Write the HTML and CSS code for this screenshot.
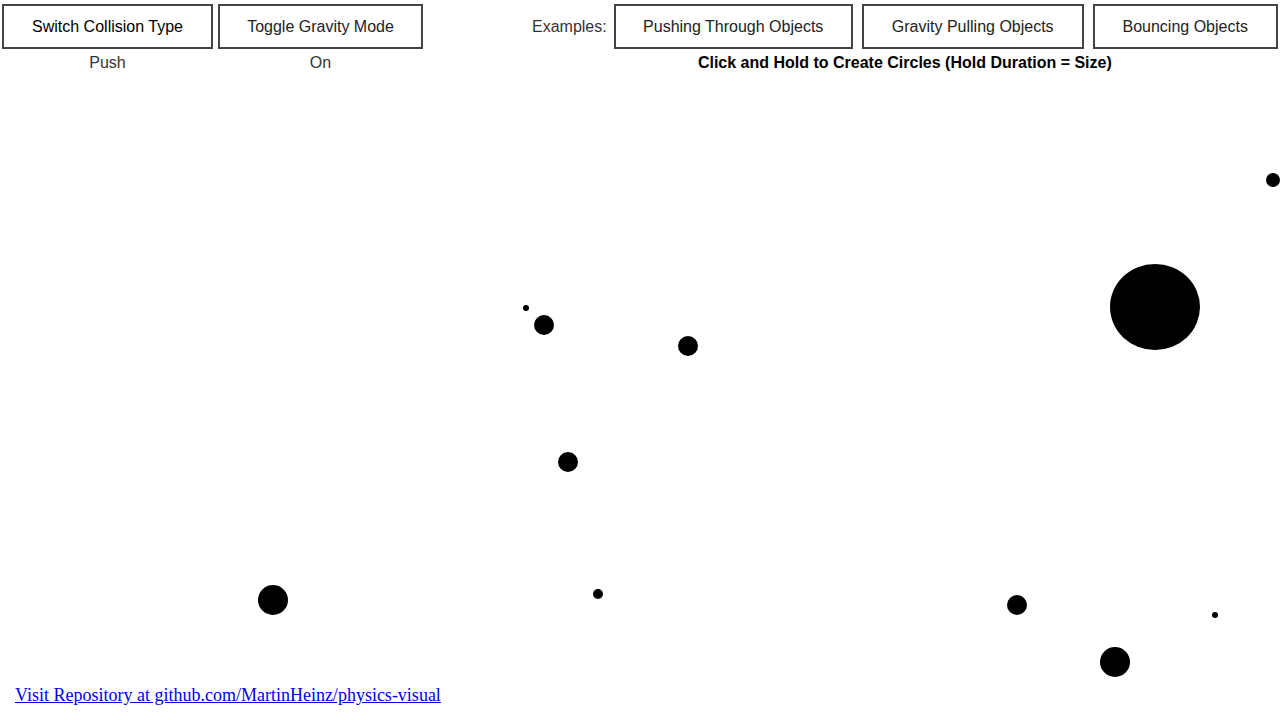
FILE: index.html
```html
<!DOCTYPE html>
<html lang="en">
<head>
    <meta charset="UTF-8">
    <meta name="viewport" content="width=device-width, initial-scale=1.0">
    <title>Physics Visual</title>
    <link rel="stylesheet" href="styles.css">
</head>
<body>
    <!-- Controles -->
    <div class="controls">
        <div class="control">
            <button class="btn btn-collision">Switch Collision Type</button>
            <span class="state">Push</span>
        </div>
        <div class="control">
            <button class="btn btn-gravity">Toggle Gravity Mode</button>
            <span class="state">On</span>
        </div>
        <div class="examples">
            <div class="examples-row">
                <span class="examples-label">Examples:</span>
                <button class="btn btn-push">Pushing Through Objects</button>
                <button class="btn btn-pull">Gravity Pulling Objects</button>
                <button class="btn btn-bounce">Bouncing Objects</button>
            </div>
            <p class="hint">Click and Hold to Create Circles (Hold Duration = Size)</p>
        </div>
    </div>

    <!-- Area dos circulos -->
    <svg class="field" width="1280" height="720" viewBox="0 0 1280 720">
        <circle cx="1273" cy="180" r="7"/>
        <ellipse cx="1155" cy="307" rx="45" ry="43"/>
        <circle cx="526" cy="308" r="3"/>
        <circle cx="544" cy="325" r="10"/>
        <circle cx="688" cy="346" r="10"/>
        <circle cx="568" cy="462" r="10"/>
        <circle cx="273" cy="600" r="15"/>
        <circle cx="598" cy="594" r="5"/>
        <circle cx="1017" cy="605" r="10"/>
        <circle cx="1215" cy="615" r="3"/>
        <circle cx="1115" cy="662" r="15"/>
    </svg>

    <footer class="footer">
        <a href="#">Visit Repository at github.com/MartinHeinz/physics-visual</a>
    </footer>
</body>
</html>
```

FILE: styles.css
```css
/* Estilo do Corpo */
body {
    margin: 0;
    height: 100vh;
    display: flex;
    flex-direction: column;
    background-color: #fff;
    font-family: "Liberation Sans", Arial, sans-serif;
    font-size: 16px;
    color: #222;
    overflow: hidden;
}

.controls {
    display: flex;
    align-items: flex-start;
    padding: 4px 0 0 2px;
    position: relative;
    z-index: 1;
}

.control {
    display: flex;
    flex-direction: column;
    align-items: center;
    gap: 5px;
    margin-right: 5px;
}

.state {
    line-height: 18px;
    color: #333;
}

.btn {
    height: 45px;
    background-color: #fff;
    border: 2px solid #444;
    font-family: inherit;
    font-size: 16px;
    color: #222;
    padding: 0;
    cursor: pointer;
}

.btn-collision { width: 211px; color: #000; }
.btn-gravity { width: 205px; }
.btn-push { width: 239px; }
.btn-pull { width: 222px; }
.btn-bounce { width: 185px; }

.examples {
    margin-left: 104px;
    display: flex;
    flex-direction: column;
    align-items: center;
}

.examples-row {
    display: flex;
    align-items: center;
    gap: 9px;
}

.examples-label {
    color: #333;
    margin-right: -2px;
}

.hint {
    margin: 5px 0 0;
    line-height: 18px;
    font-weight: bold;
    color: #000;
}

/* Canvas dos circulos */
.field {
    position: absolute;
    top: 0;
    left: 0;
    fill: #000;
    pointer-events: none;
}

.footer {
    margin-top: auto;
    padding: 0 15px 15px;
    font-family: "Liberation Serif", "Times New Roman", serif;
    font-size: 18px;
    line-height: 20px;
    position: relative;
}

.footer a {
    color: #00e;
}
```
